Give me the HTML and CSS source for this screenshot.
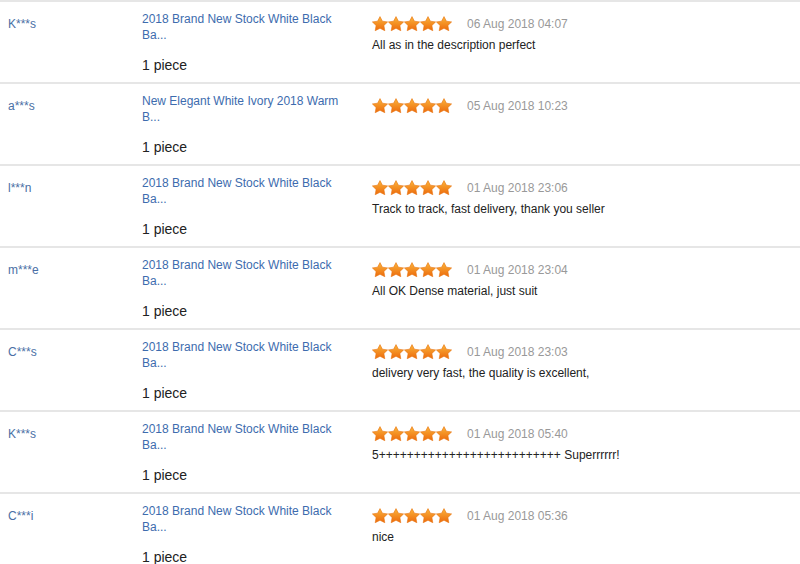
FILE: index.html
```html
<!DOCTYPE html>
<html lang="en">
<head>
    <meta charset="UTF-8">
    <title>Feedback</title>
    <link rel="stylesheet" href="styles.css">
</head>
<body>
    <svg width="0" height="0" class="defs">
        <defs>
            <linearGradient id="starfill" x1="0" y1="0" x2="0" y2="1">
                <stop offset="0" stop-color="#fbb43a"/>
                <stop offset="1" stop-color="#ec6a0c"/>
            </linearGradient>
            <symbol id="star" viewBox="0 0 16 16">
                <path d="M8 0.6l2.4 4.6 5.2.7-3.7 3.6.9 5.2L8 12.3l-4.8 2.4.9-5.2L.4 5.9l5.2-.7z" fill="url(#starfill)" stroke="#e8740f" stroke-width="0.6" stroke-linejoin="round"/>
            </symbol>
        </defs>
    </svg>

    <div class="feedback-list" id="list"></div>

    <script>
        const items = [
            { user: 'K***s', title: '2018 Brand New Stock White Black Ba...', date: '06 Aug 2018 04:07', text: 'All as in the description perfect' },
            { user: 'a***s', title: 'New Elegant White Ivory 2018 Warm B...', date: '05 Aug 2018 10:23', text: '' },
            { user: 'l***n', title: '2018 Brand New Stock White Black Ba...', date: '01 Aug 2018 23:06', text: 'Track to track, fast delivery, thank you seller' },
            { user: 'm***e', title: '2018 Brand New Stock White Black Ba...', date: '01 Aug 2018 23:04', text: 'All OK Dense material, just suit' },
            { user: 'C***s', title: '2018 Brand New Stock White Black Ba...', date: '01 Aug 2018 23:03', text: 'delivery very fast, the quality is excellent,' },
            { user: 'K***s', title: '2018 Brand New Stock White Black Ba...', date: '01 Aug 2018 05:40', text: '5++++++++++++++++++++++++++ Superrrrrr!' },
            { user: 'C***i', title: '2018 Brand New Stock White Black Ba...', date: '01 Aug 2018 05:36', text: 'nice' }
        ];

        const list = document.getElementById('list');
        const star = '<svg class="star"><use href="#star"/></svg>';

        items.forEach(item => {
            const row = document.createElement('div');
            row.className = 'feedback';
            row.innerHTML = `
                <div class="user">${item.user}</div>
                <div class="product">
                    <a class="title" href="#">${item.title}</a>
                    <div class="qty">1 piece</div>
                </div>
                <div class="review">
                    <div class="review-head">
                        <span class="stars">${star.repeat(5)}</span>
                        <span class="date">${item.date}</span>
                    </div>
                    <div class="comment">${item.text}</div>
                </div>
            `;
            list.appendChild(row);
        });
    </script>
</body>
</html>
```

FILE: styles.css
```css
body {
    margin: 0;
    font-family: Arial, "Liberation Sans", sans-serif;
    font-size: 12px;
    color: #333;
    background: #fff;
}

.defs {
    position: absolute;
}

.feedback-list {
    border-top: 2px solid #e6e6e6;
}

.feedback {
    display: flex;
    height: 71px;
    padding-top: 9px;
    border-bottom: 2px solid #e6e6e6;
}

.user {
    width: 134px;
    padding-left: 8px;
    padding-top: 5px;
    color: #4a6fa5;
    line-height: 16px;
}

.product {
    width: 230px;
}

.title {
    display: block;
    width: 210px;
    color: #3d6cae;
    text-decoration: none;
    line-height: 16px;
}

.qty {
    margin-top: 12px;
    font-size: 14px;
    line-height: 20px;
    color: #222;
}

.review-head {
    display: flex;
    align-items: center;
    height: 16px;
    margin-top: 5px;
}

.stars {
    display: flex;
    width: 80px;
}

.star {
    width: 16px;
    height: 16px;
}

.date {
    margin-left: 15px;
    color: #999;
}

.comment {
    margin-top: 5px;
    line-height: 16px;
    color: #222;
}
```
